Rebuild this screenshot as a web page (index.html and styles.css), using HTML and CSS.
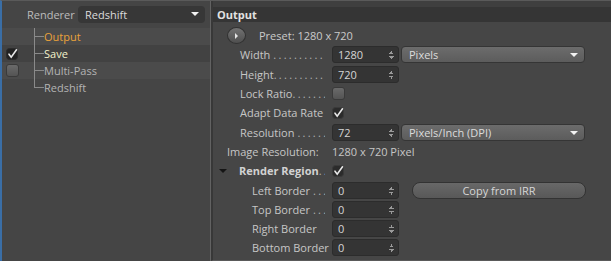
FILE: index.html
```html
<!DOCTYPE html>
<html>
<head>
    <title>Render Settings - Output</title>
    <link rel="stylesheet" href="styles.css">
</head>
<body>
<div class="app">
    <aside class="side">
        <div class="renderer">
            <span class="renderer-label">Renderer</span>
            <div class="select dark">Redshift<span class="caret"></span></div>
        </div>
        <ul class="tree">
            <li class="item stripe">
                <span class="check-col"></span>
                <span class="branch"></span>
                <span class="name active">Output</span>
            </li>
            <li class="item">
                <span class="check-col">
                    <svg class="tick" width="12" height="12" viewBox="0 0 12 12"><rect x="0.5" y="0.5" width="11" height="11" rx="3" fill="#222" stroke="#2c2c2c"/><path d="M3 6.2 L5.2 9.2 L10.5 1.8" fill="none" stroke="#e8e8e8" stroke-width="1.6" stroke-linecap="round"/></svg>
                </span>
                <span class="branch"></span>
                <span class="name saved">Save</span>
            </li>
            <li class="item stripe">
                <span class="check-col"><span class="box"></span></span>
                <span class="branch"></span>
                <span class="name">Multi-Pass</span>
            </li>
            <li class="item">
                <span class="check-col"></span>
                <span class="branch last"></span>
                <span class="name">Redshift</span>
            </li>
        </ul>
    </aside>

    <main class="main">
        <div class="head">Output</div>
        <div class="form">
            <div class="row">
                <span class="preset-btn"><span class="play"></span></span>
                <span class="preset-text">Preset: 1280 x 720</span>
            </div>
            <div class="row">
                <span class="label"><span>Width</span><span class="lead">. . . . . . . . . . . . . . . . . . . .</span></span>
                <span class="field">1280<span class="spin"></span></span>
                <div class="select light">Pixels<span class="caret"></span></div>
            </div>
            <div class="row">
                <span class="label"><span>Height</span><span class="lead tight">. . . . . . . . . . . . . . . . . . . .</span></span>
                <span class="field">720<span class="spin"></span></span>
            </div>
            <div class="row">
                <span class="label"><span>Lock Ratio</span><span class="lead tight">. . . . . . . . . . . . . . . . . . . .</span></span>
                <span class="box"></span>
            </div>
            <div class="row">
                <span class="label"><span>Adapt Data Rate</span></span>
                <svg class="tick" width="12" height="12" viewBox="0 0 12 12"><rect x="0.5" y="0.5" width="11" height="11" rx="3" fill="#2b2b2b" stroke="#3a3a3a"/><path d="M3 6.2 L5.2 9.2 L10.5 1.8" fill="none" stroke="#e8e8e8" stroke-width="1.6" stroke-linecap="round"/></svg>
            </div>
            <div class="row">
                <span class="label"><span>Resolution</span><span class="lead">. . . . . . . . . . . . . . . . . . . .</span></span>
                <span class="field">72<span class="spin"></span></span>
                <div class="select light">Pixels/Inch (DPI)<span class="caret"></span></div>
            </div>
            <div class="row">
                <span class="label outdent"><span>Image Resolution:</span></span>
                <span class="value">1280 x 720 Pixel</span>
            </div>
            <div class="row">
                <span class="label group"><span class="fold"></span><b>Render Region</b><span class="lead tight">. . . . . . . . . . . . . . . . . . . .</span></span>
                <svg class="tick" width="12" height="12" viewBox="0 0 12 12"><rect x="0.5" y="0.5" width="11" height="11" rx="3" fill="#2b2b2b" stroke="#3a3a3a"/><path d="M3 6.2 L5.2 9.2 L10.5 1.8" fill="none" stroke="#e8e8e8" stroke-width="1.6" stroke-linecap="round"/></svg>
            </div>
            <div class="row">
                <span class="label sub"><span>Left Border</span><span class="lead">. . . . . . . . . . . . . . . . . . . .</span></span>
                <span class="field">0<span class="spin"></span></span>
                <span class="button">Copy from IRR</span>
            </div>
            <div class="row">
                <span class="label sub"><span>Top Border</span><span class="lead">. . . . . . . . . . . . . . . . . . . .</span></span>
                <span class="field">0<span class="spin"></span></span>
            </div>
            <div class="row">
                <span class="label sub"><span>Right Border</span></span>
                <span class="field">0<span class="spin"></span></span>
            </div>
            <div class="row">
                <span class="label sub"><span>Bottom Border</span></span>
                <span class="field">0<span class="spin"></span></span>
            </div>
        </div>
    </main>
</div>
</body>
</html>
```

FILE: styles.css
```css
body {
    margin: 0;
    background-color: #3c3c3c;
    font-family: "Open Sans", "Noto Sans", sans-serif;
    font-size: 11px;
    line-height: 15px;
    color: #c4c4c4;
    overflow: hidden;
}
.app {
    display: flex;
    width: 609px;
    height: 260px;
    border-top: 1px solid #5a5a5a;
    border-left: 2px solid #3a6ea6;
}

/* left: renderer + tree */
.side {
    width: 208px;
    background-color: #454545;
    border-right: 1px solid #626262;
}
.renderer {
    display: flex;
    align-items: center;
    height: 27px;
    padding-left: 25px;
}
.renderer-label {
    width: 51px;
    color: #bcbcbc;
}
.select {
    position: relative;
    display: flex;
    align-items: center;
    box-sizing: border-box;
    border-radius: 4px;
    color: #dcdcdc;
}
.select.dark {
    width: 127px;
    height: 17px;
    padding-left: 7px;
    background-color: #373737;
}
.select.light {
    width: 184px;
    height: 17px;
    margin-left: 2px;
    padding-left: 7px;
    background: linear-gradient(#6c6c6c, #5c5c5c);
    border: 1px solid #353535;
}
.caret {
    position: absolute;
    right: 6px;
    top: 6px;
    border-left: 4px solid transparent;
    border-right: 4px solid transparent;
    border-top: 4px solid #f2f2f2;
}
.tree {
    list-style: none;
    margin: 0;
    padding: 0;
}
.item {
    display: flex;
    align-items: center;
    height: 17px;
}
.item.stripe {
    background-color: #4b4b4b;
}
.item:nth-child(2) {
    background-color: #424242;
}
.check-col {
    display: flex;
    align-items: center;
    width: 32px;
    padding-left: 4px;
    box-sizing: border-box;
}
.branch {
    align-self: stretch;
    width: 10px;
    background:
        linear-gradient(#8a8a8a, #8a8a8a) 0 0 / 1px 100% no-repeat,
        linear-gradient(#8a8a8a, #8a8a8a) 0 8px / 10px 1px no-repeat;
}
.branch.last {
    background:
        linear-gradient(#8a8a8a, #8a8a8a) 0 0 / 1px 9px no-repeat,
        linear-gradient(#8a8a8a, #8a8a8a) 0 8px / 10px 1px no-repeat;
}
.name {
    color: #b4b4b4;
}
.name.active {
    color: #eaa23a;
}
.name.saved {
    color: #f2f2cc;
}
.box {
    display: inline-block;
    width: 11px;
    height: 11px;
    border-radius: 3px;
    background: linear-gradient(#6a6a6a, #545454);
    border: 1px solid #3a3a3a;
}

/* right: output settings */
.main {
    flex: 1;
    background-color: #464646;
    border-left: 2px solid #383838;
    border-bottom: 1px solid #5a5a5a;
    padding-top: 6px;
    box-shadow: inset 0 6px 0 #3f3f3f;
}
.head {
    height: 15px;
    padding-left: 4px;
    background-color: #353535;
    color: #e2e2e2;
    font-weight: bold;
}
.form {
    padding-top: 4px;
}
.row {
    display: flex;
    align-items: center;
    height: 19.3px;
}
.preset-btn {
    display: flex;
    align-items: center;
    justify-content: center;
    width: 17px;
    height: 15px;
    margin-left: 14px;
    border-radius: 50%;
    background: linear-gradient(#727272, #4f4f4f);
    border: 1px solid #323232;
}
.play {
    border-top: 3px solid transparent;
    border-bottom: 3px solid transparent;
    border-left: 3px solid #e6e6e6;
}
.preset-text {
    margin-left: 13px;
    color: #cacaca;
}
.label {
    display: flex;
    width: 119px;
    padding-left: 27px;
    padding-right: 7px;
    box-sizing: border-box;
    white-space: nowrap;
    color: #c6c6c6;
}
.label.outdent {
    padding-left: 14px;
}
.label.sub {
    padding-left: 39px;
}
.label.group {
    align-items: center;
    padding-left: 6px;
}
.label b {
    color: #d2d2d2;
}
.fold {
    width: 0;
    height: 0;
    margin-right: 12px;
    border-left: 4px solid transparent;
    border-right: 4px solid transparent;
    border-top: 4px solid #151515;
}
.lead {
    flex: 1;
    overflow: hidden;
    margin-left: 3px;
    color: #b0b0b0;
    letter-spacing: -0.3px;
}
.lead.tight {
    margin-left: 0;
}
.field {
    position: relative;
    display: flex;
    align-items: center;
    width: 67px;
    height: 17px;
    box-sizing: border-box;
    padding-left: 5px;
    background-color: #343434;
    border: 1px solid #2c2c2c;
    border-radius: 3px;
    color: #d4d4d4;
}
.spin {
    position: absolute;
    right: 4px;
    top: 4px;
    width: 5px;
    height: 8px;
    background:
        linear-gradient(to bottom right, transparent 50%, #9a9a9a 50%) 0 0 / 3px 3px no-repeat,
        linear-gradient(to bottom left, transparent 50%, #9a9a9a 50%) 2px 0 / 3px 3px no-repeat,
        linear-gradient(to top right, transparent 50%, #9a9a9a 50%) 0 5px / 3px 3px no-repeat,
        linear-gradient(to top left, transparent 50%, #9a9a9a 50%) 2px 5px / 3px 3px no-repeat;
}
.value {
    color: #c6c6c6;
}
.tick {
    display: block;
}
.button {
    display: flex;
    align-items: center;
    justify-content: center;
    width: 174px;
    height: 17px;
    margin-left: 13px;
    box-sizing: border-box;
    border-radius: 8px;
    background: linear-gradient(#686868, #585858);
    border: 1px solid #333333;
    color: #d6d6d6;
}
```
